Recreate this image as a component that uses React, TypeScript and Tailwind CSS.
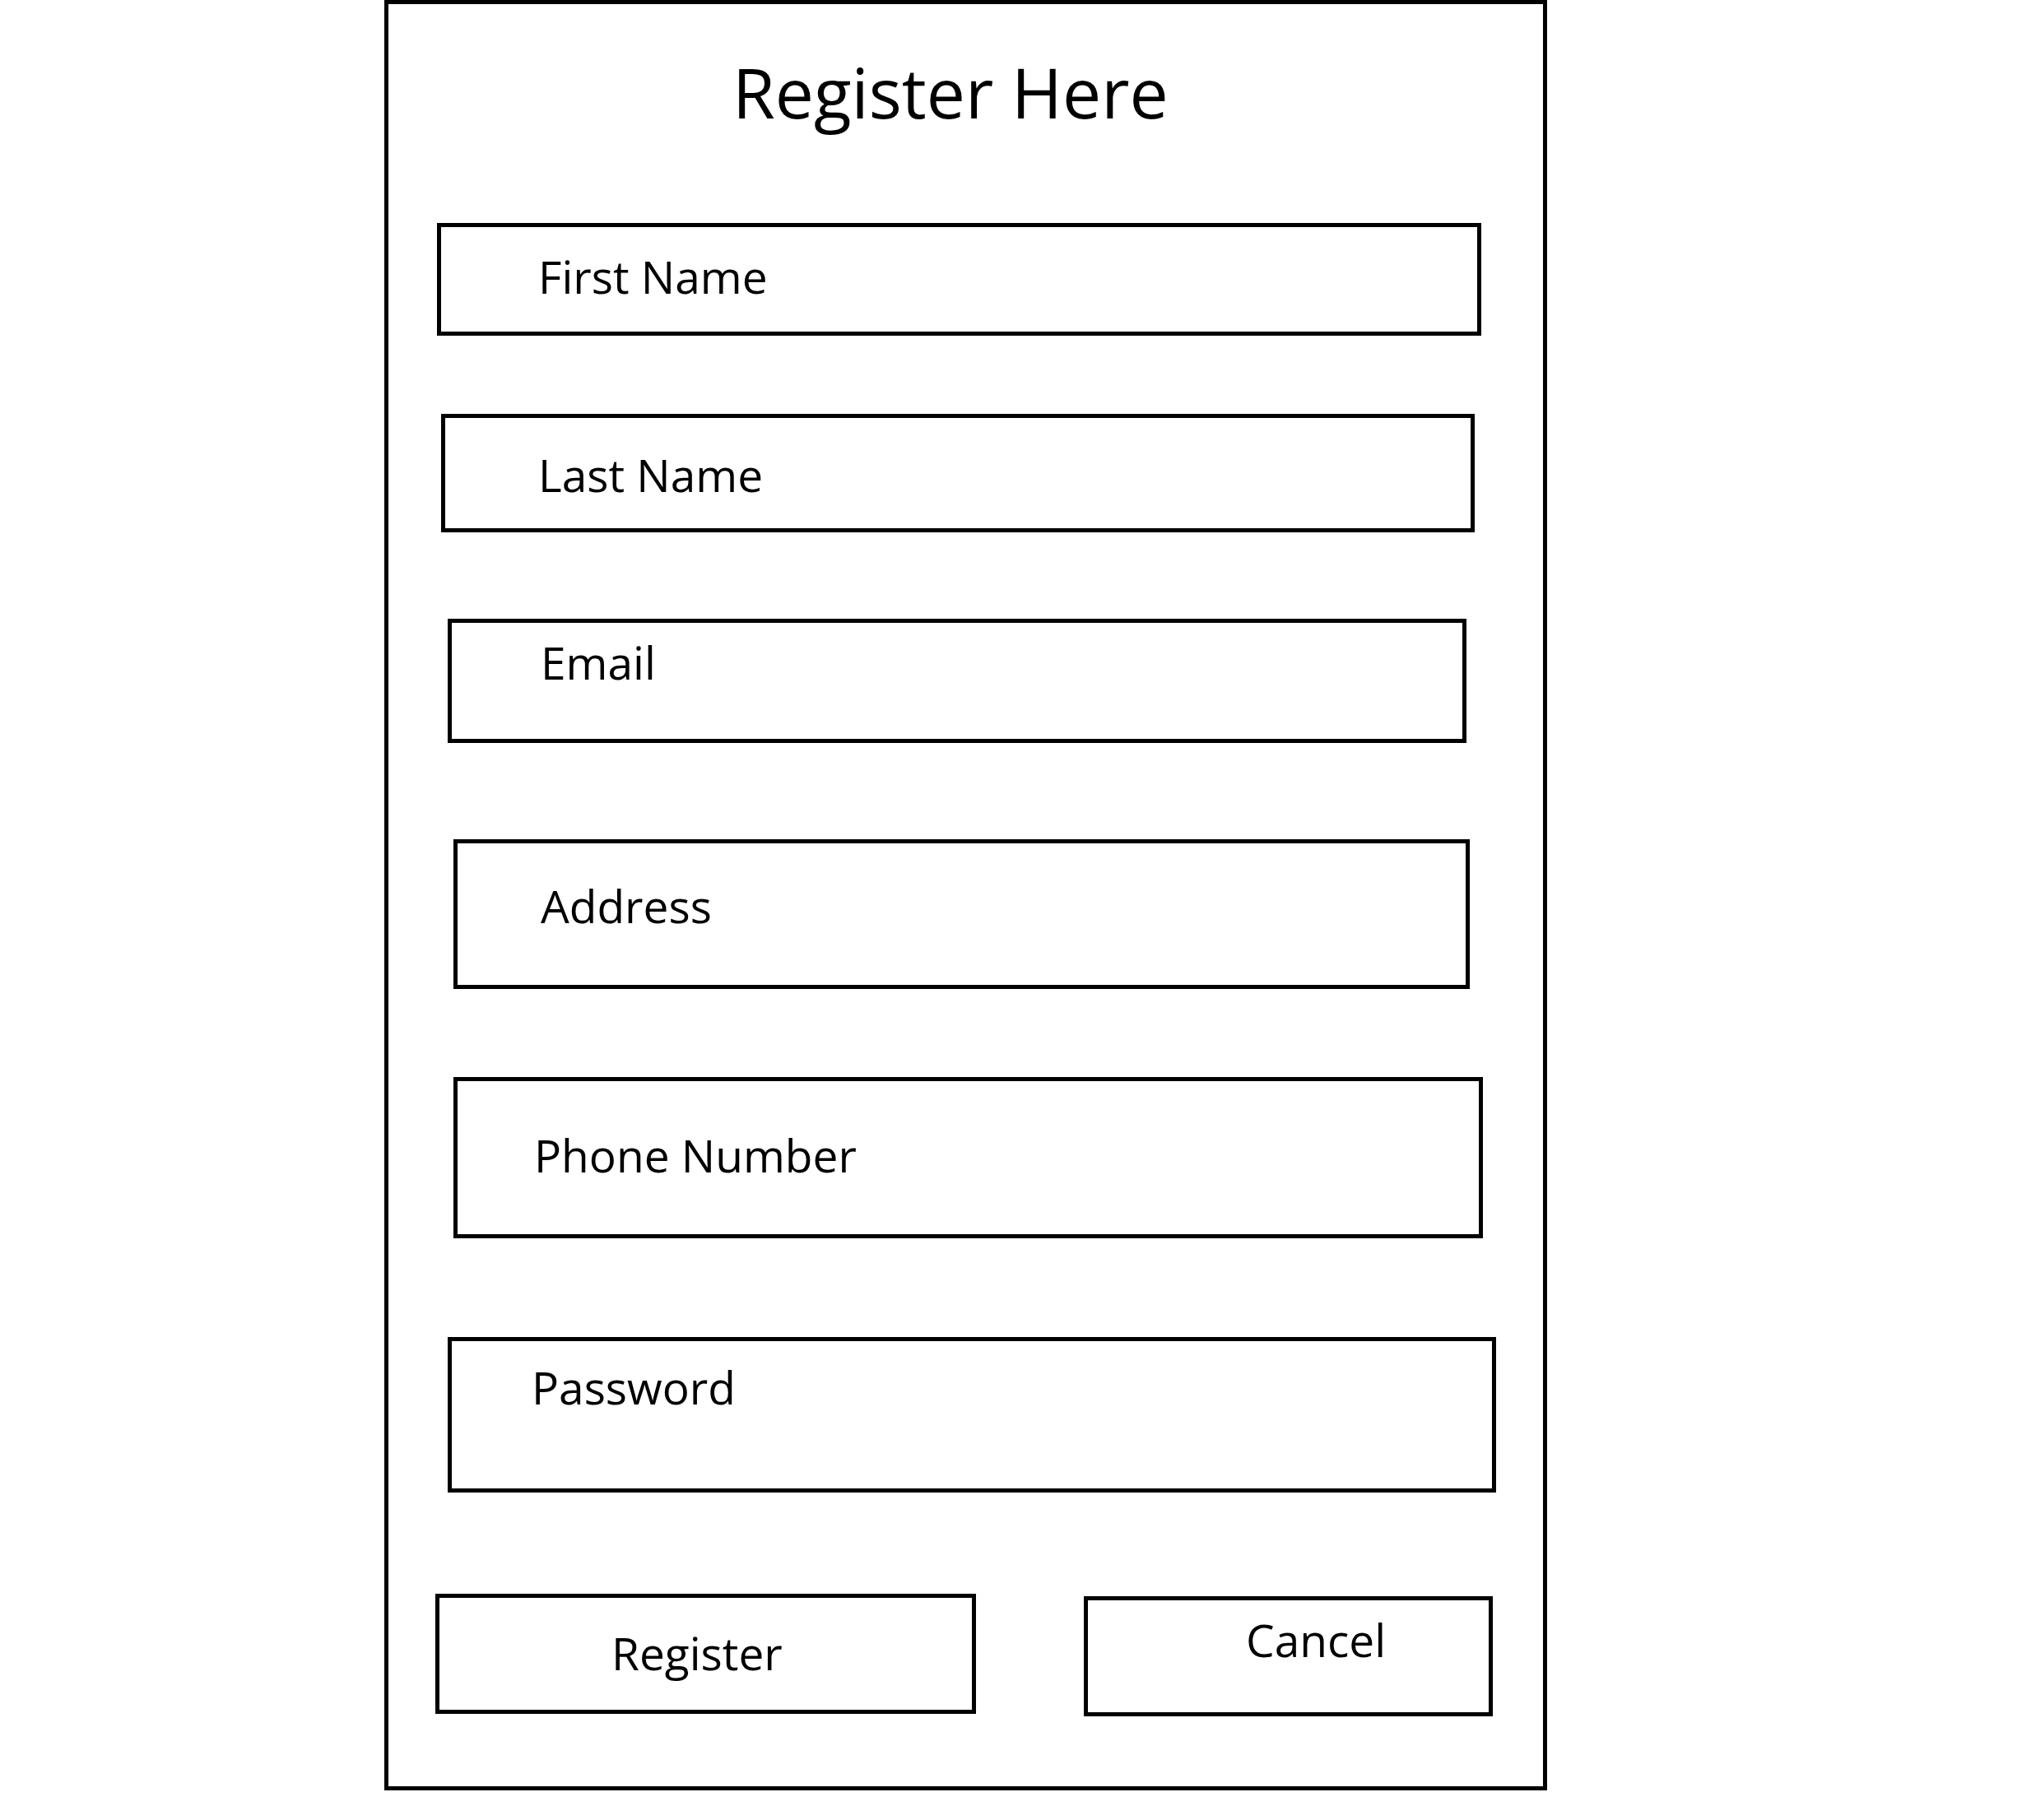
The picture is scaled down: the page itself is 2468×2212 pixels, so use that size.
import React from 'react'

const fields = [
    { label: 'First Name', box: 'ml-[59px] mt-[117px] w-[1269px] h-[137px]', text: 'pl-[118px] pt-[32px]' },
    { label: 'Last Name', box: 'ml-[64px] mt-[95px] w-[1256px] h-[144px]', text: 'pl-[113px] pt-[41px]' },
    { label: 'Email', box: 'ml-[72px] mt-[105px] w-[1238px] h-[151px]', text: 'pl-[108px] pt-[20px]' },
    { label: 'Address', box: 'ml-[79px] mt-[117px] w-[1235px] h-[182px]', text: 'pl-[101px] pt-[48px]' },
    { label: 'Phone Number', box: 'ml-[79px] mt-[107px] w-[1251px] h-[196px]', text: 'pl-[93px] pt-[62px]' },
    { label: 'Password', box: 'ml-[72px] mt-[120px] w-[1274px] h-[189px]', text: 'pl-[97px] pt-[28px]' },
]

const App = () => {
    return (
        <div className="min-h-screen bg-white text-black font-['Open_Sans',sans-serif]">
            <div className="ml-[467px]">
                <div className="flex flex-col w-[1413px] h-[2176px] border-[5px] border-black">
                    <h1 className="ml-[418px] mt-[65px] text-[84px] leading-none font-normal">
                        Register Here
                    </h1>

                    {fields.map((f) => (
                        <div key={f.label} className={`border-[5px] border-black ${f.box}`}>
                            <p className={`text-[55px] leading-none ${f.text}`}>{f.label}</p>
                        </div>
                    ))}

                    <div className="flex items-start mt-[123px]">
                        <button className="ml-[57px] w-[657px] h-[146px] border-[5px] border-black text-left">
                            <span className="block text-[55px] leading-none pl-[209px] pt-[39px] h-full">Register</span>
                        </button>
                        <button className="ml-[131px] mt-[3px] w-[497px] h-[146px] border-[5px] border-black text-left">
                            <span className="block text-[55px] leading-none pl-[192px] pt-[20px] h-full">Cancel</span>
                        </button>
                    </div>
                </div>
            </div>
        </div>
    )
}

export default App
